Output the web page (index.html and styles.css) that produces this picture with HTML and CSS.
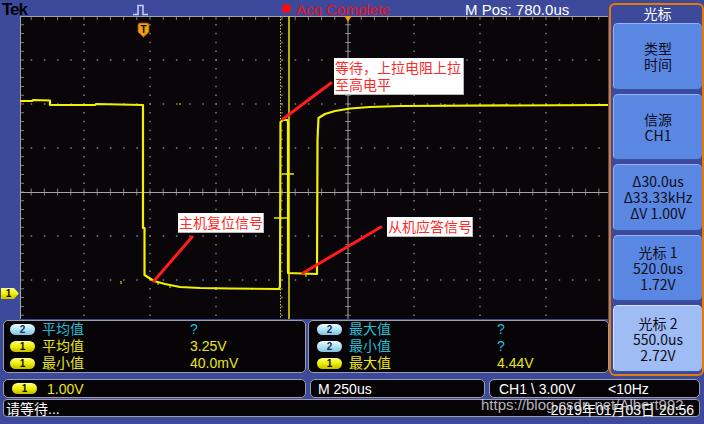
FILE: index.html
```html
<!DOCTYPE html>
<html lang="zh-CN">
<head>
  <meta charset="UTF-8">
  <title>Tek 示波器截图</title>
  <link rel="stylesheet" href="styles.css">
</head>
<body>
  <div class="scope">
    <div class="upper">
      <div class="main">
        <div class="topbar">
          <span class="tek">Tek</span>
          <span class="trig-icon">
            <svg width="16" height="12" viewBox="0 0 16 12"><path d="M0 10.5H5V1.5H10V10.5H15" fill="none" stroke="#c8cff8" stroke-width="1.5"/></svg>
          </span>
          <span class="acq">Acq Complete</span>
          <span class="mpos">M Pos: 780.0us</span>
        </div>
        <div class="screen">
          <div class="strip">
            <span class="ch-marker">1</span>
          </div>
          <div class="plot">
            <svg width="588" height="303" viewBox="0 0 588 303">
              <g fill="none" stroke="#808080" stroke-width="1.5">
                <path d="M64 0V303M130 0V303M196 0V303M262 0V303M394 0V303M460 0V303M526 0V303" stroke-dasharray="1.5 7.3" stroke-dashoffset="0.75"/>
                <path d="M0 44H588M0 88H588M0 132H588M0 220H588M0 264H588" stroke-dasharray="1.5 11.7" stroke-dashoffset="2.5"/>
                <path d="M328 0V303" stroke-width="6" stroke-dasharray="1 7.8" stroke-dashoffset="0.5"/>
                <path d="M0 176H588" stroke-width="7" stroke-dasharray="1 12.2" stroke-dashoffset="2.5"/>
                <path d="M2 0V303" stroke-width="4" stroke-dasharray="1 7.8" stroke-dashoffset="0.5"/>
                <path d="M0 2H588" stroke-width="4" stroke-dasharray="1 12.2" stroke-dashoffset="2.5"/>
              </g>
              <g fill="none" stroke="#a4a4a4" stroke-width="1">
                <path d="M328 0V303M0 176.5H588M0.5 0V303M0 0.5H588"/>
              </g>
              <!-- cursors -->
              <path d="M260.5 0V303" stroke="#d8d800" stroke-width="1" stroke-dasharray="1.5 1.5"/>
              <path d="M269 0V303" stroke="#e8e800" stroke-width="1.5"/>
              <path d="M262 158H274M254 202H267" stroke="#e8e800" stroke-width="1.5"/>
              <!-- CH1 trace -->
              <path d="M0 85L12 85L13 84L30 84.5L30 89L75 89L76 88L123 89L123 212L124.5 212L124.5 259L134 265L145 268L160 271L180 272L210 272.5L259 273L260 270.5L260.5 106L263 104L267.5 104L268 106L268 257L297 258L297.5 124L298.5 102L305 98L315 95L330 92.5L350 91L380 90L588 89"
                fill="none" stroke="#f2f200" stroke-width="2.2" stroke-linejoin="round"/>
              <path d="M101 265l0 3M138 266l0 3M150 270l0 2M196 271l0 3M232 272l0 2M286 258l0 3M425 88l0 3M160 89l0-2" stroke="#f2f200" stroke-width="1"/>
              <!-- trigger markers -->
              <path d="M118 9Q118 7 120 7H127Q129 7 129 9V16L123.5 21L118 16Z" fill="#f0a010" stroke="#9a5000" stroke-width="0.8"/>
              <text x="123.5" y="17" class="tmark">T</text>
              <path d="M324.5 0H331.5L328 6Z" fill="#f0a010"/>
              <!-- annotation arrows -->
              <g stroke="#ff1c1c" stroke-width="3" stroke-linecap="round">
                <path d="M311 67L263 103"/>
                <path d="M172 221L134 265"/>
                <path d="M361 211L283 257"/>
              </g>
            </svg>
            <div class="note note-wait"><span>等待，上拉电阻上拉</span><span>至高电平</span></div>
            <div class="note note-host">主机复位信号</div>
            <div class="note note-slave">从机应答信号</div>
          </div>
        </div>
        <div class="meas">
          <div class="mbox">
            <div class="mrow c2"><span class="badge b2">2</span><span>平均值</span><span>?</span></div>
            <div class="mrow c1"><span class="badge b1">1</span><span>平均值</span><span>3.25V</span></div>
            <div class="mrow c1"><span class="badge b1">1</span><span>最小值</span><span>40.0mV</span></div>
          </div>
          <div class="mbox mbox-right">
            <div class="mrow c2"><span class="badge b2">2</span><span>最大值</span><span>?</span></div>
            <div class="mrow c2"><span class="badge b2">2</span><span>最小值</span><span>?</span></div>
            <div class="mrow c1"><span class="badge b1">1</span><span>最大值</span><span>4.44V</span></div>
          </div>
        </div>
      </div>
      <div class="menu">
        <div class="mtitle">光标</div>
        <div class="mbtn"><span>类型</span><span>时间</span></div>
        <div class="mbtn"><span>信源</span><span>CH1</span></div>
        <div class="mbtn"><span>Δ30.0us</span><span>Δ33.33kHz</span><span>ΔV 1.00V</span></div>
        <div class="mbtn"><span>光标 1</span><span>520.0us</span><span>1.72V</span></div>
        <div class="mbtn on"><span>光标 2</span><span>550.0us</span><span>2.72V</span></div>
      </div>
    </div>
    <div class="status">
      <div class="srow">
        <div class="sbox s-ch"><span class="badge b1">1</span><span class="c1">1.00V</span></div>
        <div class="sbox s-time">M 250us</div>
        <div class="sbox s-trig c1"><span class="trig-lvl">CH1 \ 3.00V</span><span>&lt;10Hz</span></div>
      </div>
      <div class="sline">
        <span>请等待...</span>
        <span class="date">2019年01月03日 20:56</span>
        <span class="watermark">https://blog.csdn.net/Albert992</span>
      </div>
    </div>
  </div>
</body>
</html>
```

FILE: styles.css
```css
* {
  box-sizing: border-box;
}
body {
  margin: 0;
  width: 704px;
  height: 424px;
  overflow: hidden;
  background: #3d4a9b;
  font-family: "Liberation Sans", "Noto Sans CJK SC", sans-serif;
}
.scope {
  display: flex;
  flex-direction: column;
  height: 424px;
}
.upper {
  display: flex;
  height: 376px;
}
.main {
  width: 609px;
  display: flex;
  flex-direction: column;
}
.topbar {
  height: 16px;
  display: grid;
  grid-template-columns: 131px 149px 183px 1fr;
  padding-left: 2px;
  align-items: center;
  font-size: 15px;
  line-height: 16px;
  white-space: nowrap;
}
.tek {
  font-size: 17px;
  font-weight: bold;
  color: #000;
  letter-spacing: -1px;
  padding-top: 1px;
}
.trig-icon svg {
  display: block;
  margin-top: 2px;
}
.acq {
  display: flex;
  align-items: center;
  gap: 5px;
  color: #e8101a;
  padding-top: 2px;
}
.acq::before {
  content: "";
  flex: none;
  width: 9px;
  height: 9px;
  border-radius: 50%;
  background: #ff0a0a;
  margin-top: -4px;
}
.mpos {
  color: #fff;
  padding-top: 1px;
}
.screen {
  display: flex;
  height: 303px;
}
.strip {
  width: 20px;
  padding-top: 272px;
}
.ch-marker {
  display: block;
  width: 18px;
  height: 11px;
  margin-left: 1px;
  background: linear-gradient(#ffff90, #f0f000 50%, #c8c000);
  clip-path: polygon(0 0, 72% 0, 100% 50%, 72% 100%, 0 100%);
  font-size: 10px;
  font-weight: bold;
  line-height: 11px;
  text-align: center;
  color: #111;
  text-indent: -3px;
}
.plot {
  position: relative;
  width: 588px;
  height: 303px;
  background: #090508;
  overflow: hidden;
}
.plot svg {
  display: block;
}
.tmark {
  font-family: "Liberation Sans", sans-serif;
  font-size: 10px;
  font-weight: bold;
  text-anchor: middle;
  fill: #111;
}
.note {
  position: absolute;
  background: #fff;
  color: #ff2a2a;
  font-family: "Noto Sans CJK SC", sans-serif;
  font-size: 14px;
  line-height: 17px;
  padding: 1px 1px;
  white-space: nowrap;
  border-right: 1px solid #b8b8b8;
  border-bottom: 1px solid #b8b8b8;
}
.note span {
  display: block;
  height: 17px;
}
.note-wait {
  left: 314px;
  top: 42px;
  width: 130px;
  height: 37px;
}
.note-host {
  left: 158px;
  top: 197px;
  width: 86px;
  height: 20px;
}
.note-slave {
  left: 367px;
  top: 201px;
  width: 86px;
  height: 20px;
}
.meas {
  display: flex;
  gap: 2px;
  padding: 1px 0 0 3px;
  height: 57px;
}
.mbox {
  width: 303px;
  height: 53px;
  background: #070407;
  border: 1px solid #9c9cab;
  border-radius: 5px;
  padding-left: 6px;
}
.mbox-right {
  width: 301px;
  padding-left: 8px;
}
.mrow {
  display: grid;
  grid-template-columns: 25px 141px 1fr;
  column-gap: 7px;
  height: 17px;
  align-items: center;
  font-size: 14px;
  line-height: 17px;
}
.badge {
  display: block;
  height: 11px;
  border-radius: 6px;
  font-family: "Liberation Sans", sans-serif;
  font-size: 10px;
  font-weight: bold;
  line-height: 11px;
  text-align: center;
  color: #111;
}
.b1 {
  background: linear-gradient(#ffff90, #eeee00 50%, #c4bc00);
}
.b2 {
  background: linear-gradient(#f0fcff, #b0e4f4 50%, #80c4dc);
  color: #1c2c5c;
}
.c1 {
  color: #e8e41c;
}
.c2 {
  color: #22bcd4;
}
.menu {
  width: 95px;
  margin-top: 3px;
  height: 373px;
  border: 2px solid #e57a08;
  border-radius: 6px;
  display: flex;
  flex-direction: column;
  gap: 4px;
  padding: 0 0 2px 2px;
  font-family: "Noto Sans CJK SC", sans-serif;
}
.mtitle {
  height: 14px;
  text-align: center;
  color: #fff;
  font-size: 14px;
  line-height: 14px;
  padding-top: 1px;
}
.mbtn {
  flex: 1;
  background: #5a87e2;
  border-radius: 5px;
  border-top: 1px solid #93b3f6;
  border-left: 1px solid #93b3f6;
  border-bottom: 1px solid #33529f;
  display: flex;
  flex-direction: column;
  justify-content: center;
  align-items: center;
  text-align: center;
  font-size: 14px;
  line-height: 16px;
  color: #0d0d1a;
}
.mbtn span {
  display: block;
  height: 16px;
  white-space: nowrap;
}
.mbtn.on {
  background: #a0bcf4;
  border-top-color: #d0e0ff;
  border-left-color: #d0e0ff;
}
.status {
  padding-top: 3px;
  display: flex;
  flex-direction: column;
  gap: 1px;
}
.srow {
  display: flex;
  gap: 4px;
  padding-left: 3px;
  height: 19px;
}
.sbox {
  background: #070407;
  border: 1px solid #9c9cab;
  border-radius: 5px;
  display: flex;
  align-items: center;
  font-size: 14px;
  color: #fff;
  white-space: nowrap;
}
.s-ch {
  width: 303px;
  padding-left: 8px;
  gap: 10px;
}
.s-ch .badge {
  width: 25px;
}
.s-time {
  width: 175px;
  padding-left: 7px;
}
.s-trig {
  width: 211px;
  padding-left: 9px;
}
.trig-lvl {
  width: 109px;
}
.sline {
  position: relative;
  margin-left: 3px;
  width: 697px;
  height: 18px;
  background: #070407;
  border: 1px solid #9c9cab;
  border-radius: 4px;
  display: flex;
  align-items: center;
  padding: 0 5px 0 2px;
  font-size: 14px;
  color: #fff;
  white-space: nowrap;
}
.date {
  margin-left: auto;
  padding-top: 2px;
}
.watermark {
  position: absolute;
  left: 477px;
  top: -4px;
  font-size: 15px;
  color: rgba(215, 215, 220, 0.85);
}
```
